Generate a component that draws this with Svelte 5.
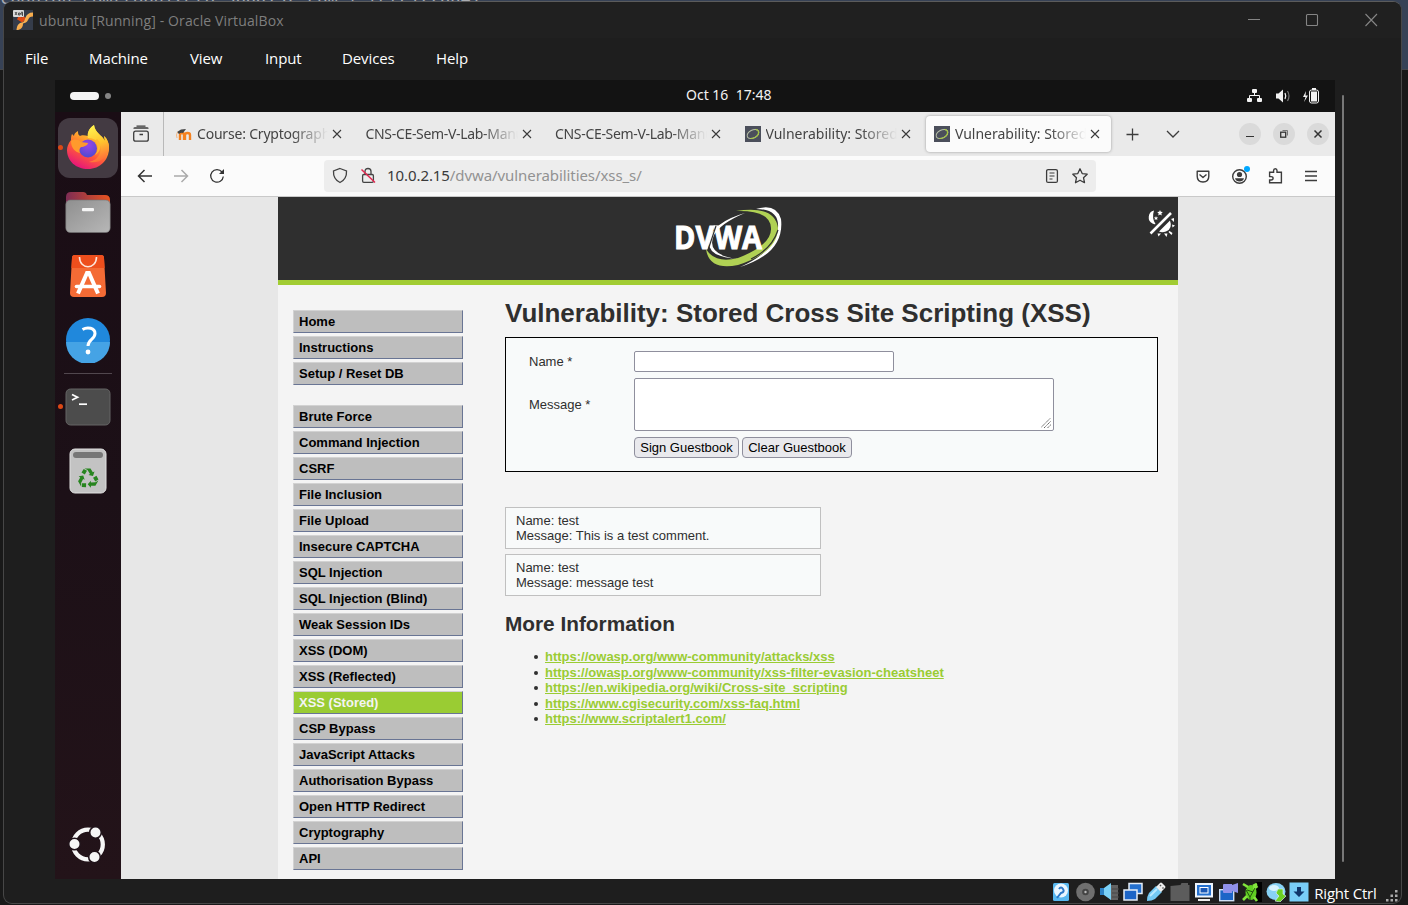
<script>
  const menus = [['File', 24, 21], ['Machine', 61, 40], ['View', 35, 40], ['Input', 38, 40], ['Devices', 55, 39], ['Help', 34, 39]];
  const tabs = [
    { icon: 'moodle', text: 'Course: Cryptography' },
    { icon: '', text: 'CNS-CE-Sem-V-Lab-Manual' },
    { icon: '', text: 'CNS-CE-Sem-V-Lab-Manual' },
    { icon: 'dvwa', text: 'Vulnerability: Stored Cross' },
    { icon: 'dvwa', text: 'Vulnerability: Stored Cross', active: true }
  ];
  const groups = [
    ['Home', 'Instructions', 'Setup / Reset DB'],
    ['Brute Force', 'Command Injection', 'CSRF', 'File Inclusion', 'File Upload', 'Insecure CAPTCHA', 'SQL Injection', 'SQL Injection (Blind)', 'Weak Session IDs', 'XSS (DOM)', 'XSS (Reflected)', 'XSS (Stored)', 'CSP Bypass', 'JavaScript Attacks', 'Authorisation Bypass', 'Open HTTP Redirect', 'Cryptography', 'API']
  ];
  const comments = [['test', 'This is a test comment.'], ['test', 'message test']];
  const links = ['https://owasp.org/www-community/attacks/xss', 'https://owasp.org/www-community/xss-filter-evasion-cheatsheet', 'https://en.wikipedia.org/wiki/Cross-site_scripting', 'https://www.cgisecurity.com/xss-faq.html', 'https://www.scriptalert1.com/'];
</script>

<div class="desktop">
  <div class="behind"><span>cpanion.com/ropnize/o_3p00152_com_l_rerc1220041</span></div>
  <div class="window">
    <header class="title">
      <svg class="vb" width="20" height="20" viewBox="0 0 20 20">
        <defs><linearGradient id="vbg" x1="0" y1="0" x2="1" y2="1"><stop offset="0" stop-color="#ffd27a" /><stop offset="1" stop-color="#f08a24" /></linearGradient></defs>
        <rect width="20" height="20" fill="#353c4a" />
        <path d="M5 7.500l4 2.500 3-2.500" fill="none" stroke="#e04a14" stroke-width="4" />
        <path d="M20 2.500v4c-3 0-4 1-5 3.500s-3 3-5 3.500c0 3-1 5.500-5 6.500H3.500c.5-4.500 2-7 5.500-7.500 2-.5 2.500-2 3.500-5s3.500-5 7.500-5z" fill="url(#vbg)" />
        <rect width="11" height="7" rx="1" fill="#d9d9d9" />
        <path d="M2 5l2-3M2 2l2 3M5.500 5V3h1.500v2H5.500M9 1.500L7.500 4H10M9.500 2v4" stroke="#333" stroke-width=".8" fill="none" />
      </svg>
      <span class="titletext">ubuntu [Running] - Oracle VirtualBox</span>
      <svg class="wincontrols" width="134" height="14" viewBox="0 0 134 14" fill="none" stroke="#858585" stroke-width="1.100">
        <path d="M1 6.500h12M118.500 1l11.500 12M130 1l-11.500 12" /><rect x="59.500" y="1.500" width="11" height="11" rx="1" />
      </svg>
    </header>
    <nav class="menubar">
      {#each menus as [m, w, gap]}<span style="width:{w}px;margin-left:{gap}px">{m}</span>{/each}
    </nav>
    <div class="middle">
      <div class="guest">
        <div class="topbar">
          <i class="pill"></i><i class="wdot"></i>
          <span class="clock">Oct 16&nbsp; 17:48</span>
          <svg width="76" height="20" viewBox="0 0 76 20" fill="#f2f2f2">
            <rect x="6" y="3" width="5" height="4" rx="1" /><rect x="1" y="12" width="5" height="4" rx="1" /><rect x="11" y="12" width="5" height="4" rx="1" />
            <path d="M8.500 6v3.500M3.500 13V9.500h10V13" fill="none" stroke="#f2f2f2" stroke-width="1" />
            <path d="M30 7.500h2.500L37 3.500v13l-4.500-4H30z" />
            <path d="M39 7q1.500 3 0 6" fill="none" stroke="#f2f2f2" stroke-width="1.300" /><path d="M41.500 5q3 5 0 10" fill="none" stroke="#777" stroke-width="1.200" />
            <path d="M60 5l-3 6h2.500L58 16l4-6.500h-2.500z" />
            <rect x="63.500" y="4" width="9" height="13" rx="2" fill="none" stroke="#f2f2f2" /><rect x="66" y="2" width="4" height="2" /><rect x="65" y="5.500" width="6" height="10" />
          </svg>
        </div>
        <div class="guestmain">
          <aside class="dock">
            <div class="tile sel run">
              <svg width="44" height="46" viewBox="0 0 44 46">
                <defs>
                  <linearGradient id="ff" x1=".8" y1="0" x2=".3" y2="1"><stop offset=".1" stop-color="#ffe141" /><stop offset=".4" stop-color="#ffa12c" /><stop offset=".65" stop-color="#ff5a3a" /><stop offset="1" stop-color="#e5127d" /></linearGradient>
                  <linearGradient id="fl" x1=".3" y1="0" x2=".5" y2="1"><stop offset="0" stop-color="#fff44f" /><stop offset=".5" stop-color="#ffc42e" /><stop offset="1" stop-color="#ff6a3a" /></linearGradient>
                  <radialGradient id="fg" cx=".5" cy=".3" r=".7"><stop offset="0" stop-color="#9a45e8" /><stop offset="1" stop-color="#4e4ad0" /></radialGradient>
                </defs>
                <path d="M6 9c-1 2-1 4-1 6C2 19 1 22 1 25c0 11 9 19 21 19s21-9 21-21c0-5-2-10-5-12l1 5c-3-6-10-8-11-16-5 3-6 7-6 11-3-1-7-1-8 0-2-1-2-3-2-5-3 2-4 3-4 5z" fill="url(#ff)" />
                <path d="M28 0c-6 4-7 9-6 13 9 0 15 7 12 15-2 6-7 8-11 9 11 2 20-5 20-15 0-4-2-8-5-11l1 5c-3-6-10-8-11-16z" fill="url(#fl)" />
                <circle cx="22" cy="23.500" r="9" fill="url(#fg)" />
                <path d="M5 16c3-2 7-2 10 1l7 1c0 2-4 4-7 4-2 2-2 4-1 6-5-1-9-5-9-12z" fill="#ff9a2c" />
                <path d="M29 16c3 3 4 10 0 14 5-2 8-11 2-16z" fill="#ffb72e" />
              </svg>
            </div>
            <div class="tile up">
              <svg width="46" height="42" viewBox="0 0 46 42">
                <defs><linearGradient id="f1"><stop stop-color="#7d2c54" /><stop offset="1" stop-color="#e95420" /></linearGradient><linearGradient id="f2" x1="0" y1="0" x2="1" y2="1"><stop stop-color="#8f8f8f" /><stop offset="1" stop-color="#b7b7b7" /></linearGradient></defs>
                <path d="M1 6q0-5 5-5h12q3 0 4 3h18q5 0 5 5v15H1z" fill="url(#f1)" /><rect x=".8" y="9" width="44.400" height="32.500" rx="4.500" fill="url(#f2)" stroke="#747474" stroke-width=".6" /><rect x="17" y="17" width="12" height="3.200" rx="1" fill="#f5f5f5" />
              </svg>
            </div>
            <div class="tile">
              <svg width="38" height="44" viewBox="0 0 38 44">
                <path d="M3 4q0-3 3-3h26q3 0 3 3l2 35q0 4-4 4H5q-4 0-4-4z" fill="#f46b35" /><path d="M3 4q0-3 3-3h26q3 0 3 3l.6 10H2.400z" fill="#ee4f1d" />
                <path d="M10.500 3c0 13 17 13 17 0" fill="none" stroke="#fde7dc" stroke-width="1.600" />
                <path d="M9 39.500L18 19h2l9 20.500" fill="none" stroke="#fff" stroke-width="4" /><path d="M7.500 32.500h23" fill="none" stroke="#fff" stroke-width="3.600" stroke-linecap="round" />
              </svg>
            </div>
            <div class="tile">
              <svg width="46" height="46" viewBox="0 0 46 46">
                <circle cx="23" cy="23" r="22" fill="#2088dc" /><path d="M1 25h44a22 22 0 0 1-44 0z" fill="#45a3e5" />
                <path d="M17.500 12.500c5-3 12.500-1.500 12.500 4 0 6-7 6-7 12.500" fill="none" stroke="#fff" stroke-width="3" /><circle cx="23" cy="35" r="2.400" fill="#fff" />
              </svg>
            </div>
            <hr />
            <div class="tile run">
              <svg width="46" height="38" viewBox="0 0 46 38"><rect x="1" y="1" width="44" height="36" rx="4.500" fill="#4c4c4c" stroke="#656565" /><path d="M7 6.500l5.500 2.800L7 12" fill="none" stroke="#fff" stroke-width="1.800" /><path d="M14 16.200h8" stroke="#fff" stroke-width="1.700" /></svg>
            </div>
            <div class="tile">
              <svg width="38" height="46" viewBox="0 0 38 46"><rect x="1" y="1" width="36" height="44" rx="5" fill="#c3c3c3" stroke="#e0e0e0" /><rect x="4" y="4" width="30" height="6" rx="3" fill="#777" />
                <g transform="translate(19 30.500)" fill="#27851f"><g id="arm"><path d="M-3.500-10H2.500L4.800-6.200 6.500-7 5-2.600.5-3.600 2-4.500-.5-8.400zM-4.300-9.600L-1-7.800-3.200-4-6.500-6z" /></g><use href="#arm" transform="rotate(120)" /><use href="#arm" transform="rotate(240)" /></g></svg>
            </div>
            <div class="logo">
              <svg width="38" height="38" viewBox="0 0 38 38"><circle cx="20" cy="18.500" r="14.800" fill="none" stroke="#f6f6f6" stroke-width="4.300" /><g fill="#f6f6f6" stroke="#21141b" stroke-width="1.600"><circle cx="6.500" cy="18" r="5.800" /><circle cx="27.500" cy="6.500" r="5.800" /><circle cx="26.500" cy="31" r="5.800" /></g></svg>
            </div>
          </aside>
          <section class="browser">
            <div class="tabbar">
              <div class="view"><svg width="18" height="18" viewBox="0 0 18 18" fill="none" stroke="#3c3c3c" stroke-width="1.300"><rect x="1.700" y="6.200" width="14.600" height="10" rx="2" /><path d="M2 3.800q0-.8 1-.8h12q1 0 1 .8M4.500 1.200h9M7.500 9.500h3.500" /></svg></div>
              <div class="tabs">
                {#each tabs as t}
                  <div class="tab" class:active={t.active}>
                    {#if t.icon === 'moodle'}
                      <svg width="16" height="16" viewBox="0 0 16 16"><path d="M4 14V9q0-2 2-2t2 2v5M9 14V9q0-2 2.500-2T14 9v5" fill="none" stroke="#f58220" stroke-width="2.400" /><path d="M1 6l4-2.500 5-.5-3 4q-2-1-4 1z" fill="#444" /><path d="M1.500 6l-1 3 .5 3" fill="none" stroke="#f6a057" stroke-width=".7" /></svg>
                    {:else if t.icon}
                      <svg class="fav" width="16" height="16" viewBox="0 0 16 16"><rect width="16" height="16" fill="#4b4f5b" /><g transform="rotate(-28 8 8)"><ellipse cx="8" cy="8" rx="6.300" ry="4" fill="none" stroke="#b9c2a8" stroke-width="1" /><path d="M3.500 10.700q5 2.500 9 0 3-3 0-5.500" fill="none" stroke="#a5c83c" stroke-width="1.200" /></g></svg>
                    {/if}
                    <span class="tabtext" class:dv={t.icon === 'dvwa'} class:cn={!t.icon}>{t.text}</span>
                    <svg width="10" height="10" viewBox="0 0 10 10"><path d="M1 1l8 8M9 1l-8 8" stroke="#3a3a3a" stroke-width="1.100" /></svg>
                  </div>
                {/each}
              </div>
              <svg class="tabtools" width="56" height="16" viewBox="0 0 56 16" fill="none" stroke="#3c3c3c" stroke-width="1.300"><path d="M.5 8.500h12M6.500 2.500v12M41 5l6 6 6-6" /></svg>
              <div class="wbtns">
                <b><svg width="20" height="20" viewBox="0 0 20 20"><path d="M6 12.500h8" stroke="#333" stroke-width="1.200" /></svg></b>
                <b><svg width="20" height="20" viewBox="0 0 20 20" fill="none"><path d="M8.500 6.500h5v5" stroke="#777" /><rect x="6.700" y="8.200" width="5" height="5" stroke="#333" stroke-width="1.300" /></svg></b>
                <b><svg width="20" height="20" viewBox="0 0 20 20"><path d="M6.500 6.500l7 7M13.500 6.500l-7 7" stroke="#333" stroke-width="1.500" /></svg></b>
              </div>
            </div>
            <div class="navbar">
              <svg class="arrows" width="90" height="18" viewBox="0 0 90 18" fill="none" stroke-width="1.500">
                <path d="M15 9H1.500M7.500 3l-6 6 6 6" stroke="#333" /><path d="M37 9h13.500M44.500 3l6 6-6 6" stroke="#aaa" />
                <path d="M85 5A6.300 6.300 0 1 0 86.300 9.500" stroke="#333" stroke-width="1.300" /><path d="M87 2v5h-5z" fill="#333" />
              </svg>
              <div class="url">
                <svg width="46" height="20" viewBox="0 0 46 20" fill="none" stroke="#444" stroke-width="1.300"><path d="M9 2.500l6.500 2.500q.5 8-6.500 11.500Q2 13 2.500 5z" /><rect x="31.600" y="8.500" width="10.800" height="7.800" rx="1.200" /><path d="M34 8V5.500q0-3 3-3t3 3V8" /><path d="M30.500 3.500l13.500 13" stroke="#e22850" stroke-width="1.500" /></svg>
                <span class="addr">10.0.2.15<em>/dvwa/vulnerabilities/xss_s/</em></span>
                <svg class="urlr" width="46" height="20" viewBox="0 0 46 20" fill="none" stroke="#3c3c3c" stroke-width="1.300"><rect x="2.600" y="3.600" width="10.800" height="12.800" rx="1.500" /><path d="M5.500 7h5M5.500 10h5M5.500 13h3" stroke-width="1.100" /><path d="M36 2.800l2.200 4.800 5 .6-3.700 3.500 1 5-4.500-2.500-4.500 2.500 1-5-3.700-3.500 5-.6z" stroke-linejoin="round" /></svg>
              </div>
              <svg class="navr" width="128" height="24" viewBox="0 0 128 24" fill="none" stroke="#3c3c3c" stroke-width="1.400">
                <path d="M4.200 7.200h11.600v5q0 5.500-5.800 5.800-5.800-.3-5.800-5.800zM6.500 10.500l3.500 3 3.500-3" stroke-linejoin="round" />
                <circle cx="46.500" cy="12.500" r="6.800" /><circle cx="46.500" cy="10.500" r="2.600" fill="#3c3c3c" stroke="none" /><path d="M42 14.200h9q-1 3.300-4.500 3.300T42 14.200z" fill="#3c3c3c" stroke="none" /><circle cx="54" cy="5" r="3" fill="#00a8ff" stroke="none" />
                <path d="M76.600 11V8.200h4V6.500q0-1.800 1.700-1.800T84 6.500v1.700h4.400v10.500H76.600V16h1.500q2 0 2-1.700t-2-1.700h-1.500z" />
                <path d="M112 7.500h12M112 12h12M112 16.500h12" stroke-width="1.300" />
              </svg>
            </div>
            <div class="page">
              <div class="container">
                <div class="head">
                  <svg class="brand" width="112" height="66" viewBox="0 0 112 66">
                    <path d="M70 9Q46 19 39 31q-9 20 24 24-31-2-29-18Q38 18 70 9z" fill="#fff" />
                    <path d="M81 5q20-6 25 10 4 34-41 48 30-13 37-33 6-25-21-25z" fill="#fff" />
                    <path d="M61 7q39-6 42 17 0 24-40 37-29 6-32-16 9 15 32 9 34-13 33-30Q95 6 61 7z" fill="#b0d154" />
                    <path d="M103 26Q97 45 76 55" stroke="#2f2f2f" stroke-width="1.200" fill="none" />
                    <text x="-1" y="44.500" textLength="88" lengthAdjust="spacingAndGlyphs">DVWA</text>
                    <path d="M41 22L33 46" stroke="#2f2f2f" stroke-width="1.200" />
                  </svg>
                  <svg class="theme" width="28" height="28" viewBox="0 0 28 28" fill="#fff"><path d="M7 1.500A7 7 0 0 0 5.500 14.500q2 1 3 .500Q4.500 9 7 1.500zM13 1l.8 1.800 2 .2-1.500 1.400.5 2-1.800-1-1.800 1 .5-2-1.500-1.400 2-.2zM9 7l.6 1.400h1.600l-1.200 1 .4 1.600L9 10.200 7.600 11l.4-1.600-1.200-1h1.600z" /><path d="M3.500 24.500L24 4" stroke="#fff" stroke-width="2.500" /><path d="M23 11.500q3 8-4 11-4 1.500-7 0zM24 10l3-1v4zM25 15.500l3 1-2.500 2zM22.500 22l3 2-1 2-3-3zM17 24.500l3.500 0-1 3.500zM10.500 24.500l3.500 0-2.500 3z" /></svg>
                </div>
                <div class="body">
                  <nav class="sidemenu">
                    {#each groups as g}<ul>{#each g as item}<li class:current={item === 'XSS (Stored)'}>{item}</li>{/each}</ul>{/each}
                  </nav>
                  <main>
                    <h1>Vulnerability: Stored Cross Site Scripting (XSS)</h1>
                    <div class="form">
                      <label for="name">Name *</label><input id="name" />
                      <label for="msg">Message *</label>
                      <div class="area" id="msg"><svg width="10" height="10" viewBox="0 0 10 10"><path d="M0 9.500L9.500 0M3 10l7-7M6.500 10L10 6.500" stroke="#555" stroke-width=".9" stroke-dasharray="1.400 .5" /></svg></div>
                      <span></span><div class="btns"><button style="width:105px">Sign Guestbook</button><button style="width:110px">Clear Guestbook</button></div>
                    </div>
                    {#each comments as [n, m]}<div class="comment">Name: {n}<br />Message: {m}</div>{/each}
                    <h2>More Information</h2>
                    <ul class="links">{#each links as l}<li><span class="a">{l}</span></li>{/each}</ul>
                  </main>
                </div>
              </div>
            </div>
          </section>
        </div>
      </div>
      <i class="scroll"></i>
    </div>
    <footer class="status">
      <svg width="20" height="20" viewBox="0 0 20 20"><rect x="2" y="1" width="16" height="18" rx="1.500" fill="#58b8f0" /><circle cx="10" cy="8.500" r="7" fill="#e9f6ff" /><path d="M8 7q2-3 4 0t-2 4l-4 5" fill="none" stroke="#2b78c8" stroke-width="2" /></svg>
      <svg width="20" height="20" viewBox="0 0 20 20"><circle cx="10.500" cy="10" r="9.300" fill="#6f6f6f" /><circle cx="10.500" cy="10" r="3.300" fill="#444" /><circle cx="10.500" cy="10" r="1.200" fill="#bbb" /></svg>
      <svg width="20" height="20" viewBox="0 0 20 20"><path d="M10 3h9v15h-7l-2-3z" fill="#626262" /><path d="M13 7h7M13 11h7M13 15h7" stroke="#464646" /><path d="M1 6h4l7-5v17l-7-5H1z" fill="#7bd2f8" /><path d="M1 6h4v7H1z" fill="#2d82c6" /></svg>
      <svg width="20" height="20" viewBox="0 0 20 20" stroke="#e6eef8" stroke-width="1.500"><rect x="6" y="1.500" width="13" height="10" fill="#2470ce" /><rect x="1" y="8" width="13" height="10" fill="#1d65c7" /></svg>
      <svg width="20" height="20" viewBox="0 0 20 20"><path d="M10 4l6 6-7 7q-3 2-8 2 0-5 2-8z" fill="#74c9f3" /><path d="M4 14L11 7" stroke="#b9e8ff" stroke-width="2" /><path d="M10 5l4-4q1-1 2 0l3 3q1 1 0 2l-4 4z" fill="#eee" /><path d="M14 3l1 1M16.500 5.500l1 1" stroke="#555" stroke-width="1.500" /></svg>
      <svg width="20" height="20" viewBox="0 0 20 20"><path d="M.5 4l10-1 1-2h6.500v2h1.500v16H.5z" fill="#5c5c5c" /></svg>
      <svg width="20" height="20" viewBox="0 0 20 20"><rect x="1" y="1" width="18" height="14.500" fill="#eef5fc" /><rect x="3" y="3" width="14" height="10.500" fill="#2470ce" /><rect x="6" y="5.500" width="8" height="5.500" fill="#1b58b4" stroke="#fff" /><path d="M4 18h12" stroke="#eee" stroke-width="2" /></svg>
      <svg width="20" height="20" viewBox="0 0 20 20"><rect x="1.700" y="7.700" width="14" height="11" fill="#1d65c7" stroke="#cfe0f5" stroke-width="1.400" /><path d="M5 3q0-1 1-1h8v9H6q-1 0-1-1zM14 3l6-2v10l-6-2z" fill="#9091ea" /></svg>
      <svg width="20" height="20" viewBox="0 0 20 20"><rect x="14" width="6" height="20" fill="#000" /><ellipse cx="9" cy="10.500" rx="5.500" ry="7.500" fill="#5fce22" /><path d="M1 2l5 3M1 18l4-4M15.500 4l-4 3M15 19l-3-4M11 4l4-2" stroke="#83e63d" stroke-width="2.600" /><path d="M4 8l4 7 5-9M5 8l6 2M8 15v3M5 7L3 5" fill="none" stroke="#23510f" stroke-width="1" /></svg>
      <svg width="20" height="20" viewBox="0 0 20 20"><ellipse cx="10" cy="9.500" rx="9.500" ry="8.500" fill="#88d2f5" /><ellipse cx="8" cy="6" rx="5" ry="3" fill="#d9f4ff" /><path d="M12 7h5v5l3 2-6 6-5-1 4-5-3-3z" fill="#6bcf22" stroke="#e7f7ff" stroke-width=".6" /></svg>
      <svg width="20" height="20" viewBox="0 0 20 20"><rect x=".5" y=".5" width="19" height="19" fill="#79cdf8" /><path d="M10 15L4.500 9.500H8V5h4v4.500h3.500z" fill="#10366c" /></svg>
      <span class="host">Right Ctrl</span>
      <svg class="grip" width="12" height="12" viewBox="0 0 12 12" fill="#aaa"><path d="M9 0h2.500v2.500H9zM9 4.500h2.500V7H9zM9 9h2.500v2.500H9zM4.500 4.500H7V7H4.500zM4.500 9H7v2.500H4.500zM0 9h2.500v2.500H0z" /></svg>
    </footer>
  </div>
</div>

<style>
  :global(body) { margin: 0; overflow: hidden; }
  * { box-sizing: border-box; }
  svg { flex: none; display: block; }
  .desktop { width: 1408px; height: 905px; overflow: hidden; display: flex; flex-direction: column; background: linear-gradient(#374256 0 69px, #45474b 69px 70px, #191919 70px); }
  .behind { height: 5px; margin-bottom: -4px; overflow: hidden; display: flex; align-items: flex-end; color: #a9acb2; font: 17px/12px "DejaVu Sans Mono", monospace; white-space: pre; }
  .behind span { margin-bottom: 1px; }
  .window { width: 1399px; height: 903px; margin-left: 3px; border: 1px solid #474747; border-top-color: #5b5b5b; border-radius: 9px; background: #1e1e1e; display: flex; flex-direction: column; overflow: hidden; font-family: "Open Sans", sans-serif; position: relative; }
  .title { height: 36px; background: #202020; display: flex; align-items: center; padding-left: 9px; }
  .titletext { margin-left: 6px; font-size: 14px; color: #7e7e7e; white-space: nowrap; letter-spacing: .13px; }
  .wincontrols { margin-left: auto; margin-right: 20px; }
  .menubar { height: 42px; padding-bottom: 2px; display: flex; align-items: center; color: #fff; font-size: 15px; letter-spacing: -.1px; white-space: nowrap; }
  .menubar span { flex: none; }
  .middle { height: 799px; padding-left: 51px; display: flex; }
  .guest { width: 1280px; display: flex; flex-direction: column; }
  .scroll { width: 2px; height: 767px; margin: 15px 0 0 7px; background: #777; border-radius: 2px; }
  .topbar { height: 32px; background: #131313; display: flex; align-items: center; padding: 0 10px 0 15px; color: #f2f2f2; font: 14px "Noto Sans", sans-serif; }
  .pill { width: 29px; height: 8px; border-radius: 4px; background: #f4f4f4; }
  .wdot { width: 6px; height: 6px; margin-left: 6px; border-radius: 50%; background: #858585; }
  .clock { width: 86px; margin: 0 auto 0 575px; padding-bottom: 3px; white-space: nowrap; letter-spacing: 0; }
  .topbar svg { margin-right: 3px; }
  .guestmain { flex: 1; min-height: 0; display: flex; }
  .dock { width: 66px; background: linear-gradient(#1a0d15, #1c1017 50%, #231319); display: flex; flex-direction: column; align-items: center; padding-top: 6px; }
  .tile { width: 60px; height: 60px; margin-bottom: 4px; border-radius: 12px; display: flex; align-items: center; justify-content: center; position: relative; flex: none; }
  .up { padding-bottom: 1px; }
  .sel { background: #433a42; }
  .run::before { content: ""; position: absolute; left: 0; top: 27px; width: 5px; height: 5px; border-radius: 50%; background: #dc4815; }
  hr { width: 48px; height: 1px; border: 0; background: #51474e; margin: -1px 0 3px; flex: none; }
  .logo { margin: auto 2px 15px 0; }
  .browser { width: 1214px; display: flex; flex-direction: column; font-family: "Noto Sans", sans-serif; }
  .tabbar { height: 44px; background: #eaeaea; display: flex; align-items: center; }
  .view { width: 43px; height: 44px; border-right: 1px solid #b9b9b9; display: flex; align-items: center; padding-left: 11px; }
  .tabs { display: flex; gap: 4.500px; padding-left: 4px; }
  .tab { width: 185px; height: 36px; padding: 0 11px 0 8px; display: flex; align-items: center; border-radius: 4px; }
  .active { background: #fbfbfb; box-shadow: 0 0 3px #999; }
  .tabtext { flex: 1; min-width: 0; margin: 0 4px 0 5px; padding-bottom: 1px; overflow: hidden; white-space: nowrap; font-size: 14px; color: #444; letter-spacing: -.2px; mask-image: linear-gradient(90deg, #000 calc(100% - 36px), transparent); }
  .cn { margin-left: 0; letter-spacing: -.32px; }
  .dv { letter-spacing: -.02px; }
  .tabtools { margin-left: 15px; }
  .wbtns { display: flex; gap: 12px; margin-left: 57px; }
  .wbtns b { width: 22px; height: 22px; border-radius: 50%; background: #dadada; display: flex; align-items: center; justify-content: center; }
  .navbar { height: 41px; background: #fbfbfb; border-bottom: 1px solid #c9c9c9; display: flex; align-items: center; }
  .arrows { margin-left: 16px; }
  .url { width: 772px; height: 32px; margin-left: 97px; border-radius: 4px; background: #ededed; display: flex; align-items: center; padding: 0 6px 0 7px; }
  .addr { margin-left: 10px; padding-bottom: 2px; font-size: 15px; letter-spacing: -.08px; color: #3a3a3a; white-space: nowrap; }
  em { color: #929292; font-style: normal; }
  .urlr { margin-left: auto; }
  .navr { margin-left: 97px; }
  .page { height: 682px; background: #e7e7e7; padding-left: 157px; font: 13px/15px "Liberation Sans", Arial, sans-serif; color: #2f2f2f; }
  .container { width: 900px; height: 682px; background: #f4f4f4; }
  .head { height: 88px; background: #2f2f2f; border-bottom: 5px solid #a1cc33; display: flex; align-items: flex-start; padding-top: 7px; }
  .brand { margin-left: 397px; }
  .brand text { font: bold 33px "Open Sans", sans-serif; fill: #fff; stroke: #fff; stroke-width: 1px; }
  .theme { margin: 5px 0 0 360px; }
  .body { display: flex; }
  .sidemenu { width: 170px; margin: 25px 0 0 15px; }
  ul { list-style: none; margin: 0 0 20px; padding: 0; display: flex; flex-direction: column; gap: 3px; }
  .sidemenu li { height: 23px; padding: 0 5px; background: #bebebe; border: 1px solid #d2d2d2; border-right-color: #697594; border-bottom-color: #697594; font-weight: bold; line-height: 21px; color: #000; }
  .sidemenu .current { background: #9acc33; color: #f4f4f4; }
  main { width: 653px; margin-left: 42px; }
  h1 { margin: 13px 0 9px; font-size: 26px; line-height: 30px; white-space: nowrap; }
  .form { height: 135px; border: 1px solid #000; background: #f8fafa; padding: 13px 23px; display: grid; grid-template-columns: 105px 420px; grid-template-rows: 21px 53px 21px; row-gap: 6px; align-items: center; margin-bottom: 35px; }
  input { width: 260px; height: 21px; border: 1px solid #8f8f9d; border-radius: 2px; padding: 0; background: #fff; }
  .area { height: 53px; border: 1px solid #8f8f9d; border-radius: 2px; background: #fff; display: flex; align-items: flex-end; justify-content: flex-end; padding: 2px; }
  .btns { display: flex; gap: 3px; }
  button { height: 21px; padding: 0; border: 1px solid #8f8f9d; border-radius: 4px; background: #e9e9ed; font: 13px "Liberation Sans", sans-serif; color: #000; white-space: nowrap; }
  .comment { width: 316px; height: 42px; margin-bottom: 5px; border: 1px solid #c0c0c0; background: #f8fafa; padding: 5px 10px; }
  h2 { margin: 16px 0 13px; font-size: 20.800px; line-height: 24px; }
  .links { gap: 0; }
  .links li { height: 15.600px; line-height: 15.600px; padding-left: 40px; position: relative; white-space: nowrap; }
  .links li::before { content: ""; position: absolute; left: 29px; top: 6px; width: 4px; height: 4px; border-radius: 50%; background: #2f2f2f; }
  .a { color: #9acc33; font-weight: bold; text-decoration: underline; }
  .status { height: 24px; padding-top: 2px; display: flex; align-items: center; gap: 3.850px; padding-left: 1047px; color: #fff; }
  .host { width: 64px; margin-left: 1px; padding-top: 2px; font-size: 15px; letter-spacing: -.2px; white-space: nowrap; }
  .grip { margin: 8px 0 0 4px; }
</style>
